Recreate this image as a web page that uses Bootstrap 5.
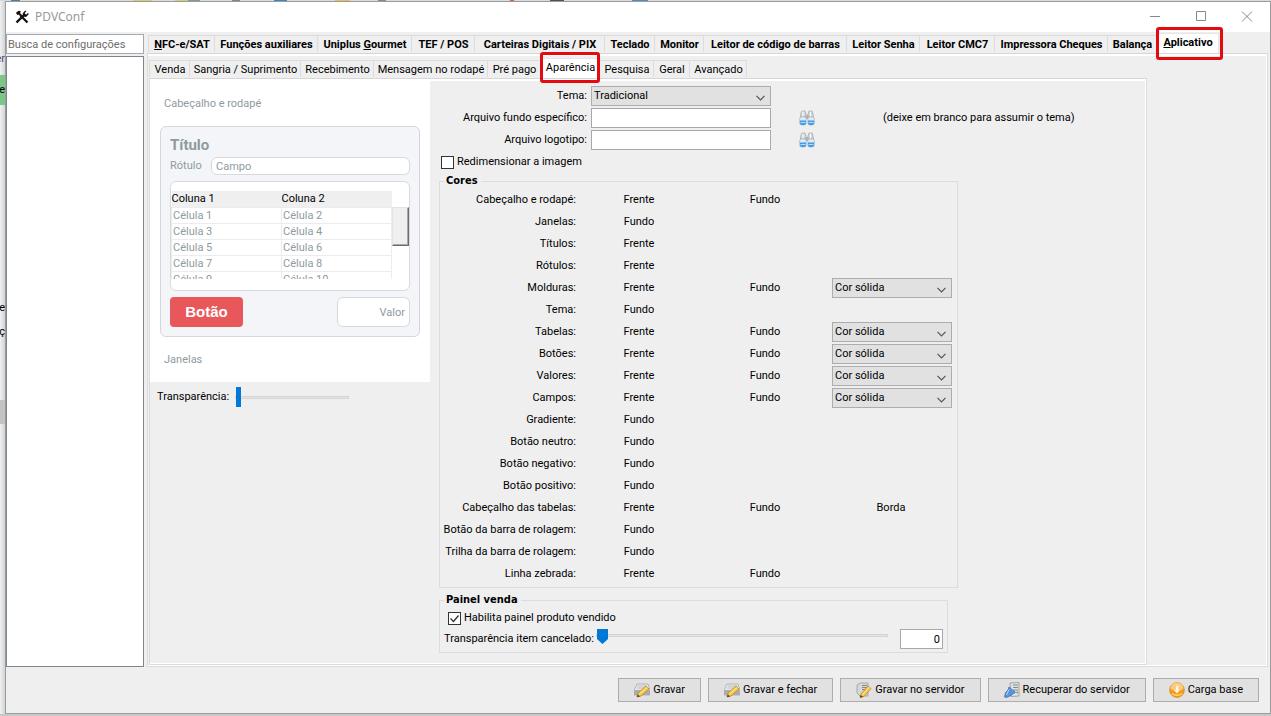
<!doctype html>
<html lang="pt-BR">
<head>
<meta charset="utf-8">
<meta name="viewport" content="width=device-width, initial-scale=1">
<title>PDVConf</title>
<link rel="stylesheet" href="https://cdn.jsdelivr.net/npm/bootstrap@5.3.0/dist/css/bootstrap.min.css">
<style>
:root{--face:#efefef;--line:#dcdcdc;--edge:#adadad;--soft:#8f9a9f}
body{font:11px/16px Roboto,"Liberation Sans",sans-serif;color:#000;background:#d9dadb}
/* desktop behind the window */
.desk-top{height:1px;background:linear-gradient(90deg,#d5dbe0 0 11px,#4f7fa0 0 20px,#dcdcdc 0 133px,#d8cb7c 0 152px,#dcdcdc 0 175px,#d8cb7c 0 188px,#7f98a8 0 200px,#dcdcdc 0 232px,#7d8792 0 240px,#dcdcdc 0 274px,#3c86bf 0 287px,#dcdcdc 0 335px,#e3bf63 0 350px,#dcdcdc 0 378px,#888 0 386px,#dcdcdc 0 510px,#d0672f 0 514px,#dcdcdc 0 550px,#4b545e 0 564px,#dcdcdc 0 632px,#4d8cc4 0 648px,#dcdcdc 0)}
.desk-side{width:5px;background:linear-gradient(90deg,#f0f1f2,#d2d3d4)}
.desk-side div{display:flex;justify-content:flex-end;align-items:center;overflow:hidden;flex:none}
.desk-a{height:72px;padding-top:44px}
.desk-b{height:30px;background:#79c886}
.desk-c{height:24px}
.desk-d{height:24px;background:#c4c4c4}
.app-window{border:1px solid #9b9b9b;background:var(--face);min-width:0}
.app-foot-shadow{height:2px;background:#c6c7c8}
.title-bar{height:30px;background:#fff;color:#999;font:12px/16px "Noto Sans",sans-serif;padding:0 15px 0 9px}
.caption-btn{border:0;background:none;padding:0;width:16px;height:16px;display:flex;align-items:center;justify-content:center}
.work{padding:2px 2px 0 0;gap:3px}
.side-col{width:138px;gap:2px}
.box-input{display:block;border:1px solid #a5a8ad;background:#fff;color:#000;height:20px;font-size:11px;line-height:16px;padding:0 2px;border-radius:0;min-width:0}
.box-input::placeholder{color:#6d6d6d;opacity:1}
.search-input{padding:0 1px}
.tree-box{border:1px solid #7f858c;background:#fff}
.tab-strip{display:grid;list-style:none;margin:0;padding:0}
.tab-strip a{display:block;color:#000;text-decoration:none;text-align:center;white-space:nowrap;height:17px;line-height:17px;border:solid var(--line);border-width:1px 1px 0 0;padding-left:1px}
.tab-strip li:first-child a{border-left-width:1px}
.tab-strip li{position:relative}
.tab-strip .current{margin-top:-2px;height:20px;background:#fff;border-color:#e6e6e6;position:relative;z-index:1}
.strip-main{font-weight:700;grid-template-columns:67px 103px 94px 63px 130px 50px 49px 143px 73px 75px 113px 49px 62px;padding:1px 0 0 1px}
.strip-sub{grid-template-columns:41px 111px 73px 114px 53px 59px 54px 36px 57px}
.ring::after{content:"";position:absolute;z-index:2;border:3px solid #e30b10;border-radius:3px;pointer-events:none}
.strip-main .ring::after{inset:-8px -4px -7px -1px}
.strip-sub .ring::after{inset:-8px 0 -5px -1px}
.panel-main,.panel-sub{border:1px solid var(--line);border-top-color:#d6d6d6;box-shadow:inset 0 2px #fff,inset -1px -1px #fff}
.panel-main{padding:6px 120px 1px 1px}
.preview{width:280px;flex:none}
.preview-page{background:#fff;height:301px;padding:0 10px;color:var(--soft)}
.preview-page .caption-line{line-height:16px;padding:15px 0 14px 4px}
.mock-card{border:1px solid #d4d7de;border-radius:6px;background:#f3f5f9;padding:8px 9px 9px}
.mock-title{font-size:15px;line-height:20px;font-weight:700}
.mock-field{border:1px solid #d6d9e0;border-radius:6px;background:#fff;color:var(--soft);font-size:11px;padding:0 4px;height:18px;min-width:0}
.mock-list{border:1px solid #d6d9e0;border-radius:6px;background:#fff;height:110px;padding-top:9px}
.mock-scroll{height:88px;overflow:hidden}
.mock-scroll table{width:221px;border-collapse:collapse;flex:none;table-layout:fixed}
.mock-scroll th{background:#efefef;color:#000;font-weight:400;padding:0;height:16px;line-height:16px}
.mock-scroll td{border:1px solid #ececec;padding:0 1px;line-height:15px;height:16px}
.mock-thumb{width:17px;height:39px;margin-top:16px;background:#efefef;border:1px solid;border-color:#e4e4e4 #6c6c6c #6c6c6c #e4e4e4;box-shadow:inset -1px -1px #a8a8a8}
.mock-btn{width:73px;height:30px;border:0;border-radius:4px;background:#e8585b;color:#fff;font:bold 15px/30px "Liberation Sans",sans-serif;padding:0}
.mock-value{width:73px;height:30px;text-align:right}
.pic-range{appearance:none;background:none;height:20px;margin:0;min-width:0;display:block}
.pic-range::-webkit-slider-runnable-track{height:3px;background:#e4e4e4;border:1px solid #d4d4d4}
.pic-range::-webkit-slider-thumb{appearance:none;background:#0078d7;border:0}
.range-bar{width:114px}
.range-bar::-webkit-slider-thumb{width:5px;height:20px;margin-top:-10px}
.range-point::-webkit-slider-thumb{width:11px;height:15px;margin-top:-6px;clip-path:polygon(0 0,100% 0,100% 66%,50% 100%,0 66%)}
.pic-select{border:1px solid var(--edge);border-radius:0;color:#000;height:20px;font-size:11px;line-height:16px;padding:0 20px 1px 2px;background:#e1e1e1 url("data:image/svg+xml,%3Csvg xmlns='http://www.w3.org/2000/svg' width='9' height='6'%3E%3Cpath d='M.5.8l4 4 4-4' fill='none' stroke='%23555' stroke-width='1.2'/%3E%3C/svg%3E") no-repeat right 5px top 8px/9px 6px}
.form-side{padding:5px 0 0 9px;min-width:0}
.file-grid{display:grid;grid-template-columns:149px 180px 66px 1fr;gap:2px 3px;align-items:center}
.file-grid .name{text-align:right;padding-right:1px}
.icon-btn{border:0;background:none;padding:0;width:16px;height:16px;display:block;justify-self:center}
.hint{padding-left:40px}
.pic-check{appearance:none;width:13px;height:13px;border:1px solid #333;background:#fff;margin:0;flex:none}
.pic-check:checked{background:#fff url("data:image/svg+xml,%3Csvg xmlns='http://www.w3.org/2000/svg' width='11' height='11'%3E%3Cpath d='M1.5 5.5l3 3 5-6' fill='none' stroke='%23333' stroke-width='1.3'/%3E%3C/svg%3E") center no-repeat}
.group-box{border:1px solid var(--line);position:relative}
.group-box legend{position:absolute;top:-9px;left:4px;width:auto;float:none;background:var(--face);font:bold 11px/16px "DejaVu Sans Condensed",sans-serif;margin:0;padding:0 3px 0 2px}
.group-colors{width:519px;padding:7px 0 2px;margin-top:11px}
.group-sale{width:509px;padding:9px 4px 3px;margin-top:12px}
.color-row{display:grid;grid-template-columns:136px 126px 126px 126px;height:22px;align-items:center;text-align:center}
.color-row .name{text-align:right}
.color-row .pic-select{width:120px;margin-left:4px}
.foot{padding:11px 11px 11px 0;gap:7px}
.foot button{height:24px;border:1px solid var(--edge);border-radius:0;background:#e1e1e1;color:#000;font-size:11px;line-height:16px;padding:0 15px;display:flex;align-items:center;justify-content:center;gap:3px;white-space:nowrap}
</style>
</head>
<body class="vh-100 d-flex flex-column overflow-hidden">
<svg class="d-none" aria-hidden="true">
  <symbol id="bino" viewBox="0 0 16 16">
    <path d="M3 1h3l1 3v3H1.500l.5-4zM10 1h3l1 3 .5 3H9V4z" fill="#d4d7da" stroke="#a4a8ac" stroke-width=".8"/>
    <path d="M4 1.500v5M11.500 1.500v5" stroke="#fff"/><path d="M6.500 5h3v4h-3z" fill="#aeb3b8"/>
    <rect x=".6" y="7" width="6.600" height="8" rx="2" fill="#e6eaee" stroke="#a9b4bf" stroke-width=".7"/>
    <rect x="8.800" y="7" width="6.600" height="8" rx="2" fill="#e6eaee" stroke="#a9b4bf" stroke-width=".7"/>
    <path d="M1 10.500h6v2.500a3 2 0 0 1-6 0zM9 10.500h6v2.500a3 2 0 0 1-6 0z" fill="#3b9cf0"/>
    <path d="M1.500 12.500h5M9.500 12.500h5" stroke="#b5dcff"/>
  </symbol>
  <symbol id="save" viewBox="0 0 16 16">
    <path d="M3 2h11l2 6v5H0V8z" fill="#e7e8ea" stroke="#a5a8ab" stroke-width=".8"/>
    <path d="M0 8h16v5H0z" fill="#a9adb1"/><path d="M4 4h9M3 6h10" stroke="#bfc3c7"/>
    <path d="M4 11l8-7 3 3-8 7-4 1z" fill="#f7c945" stroke="#b9822a" stroke-width=".8"/>
    <path d="M5.500 12l8-7" stroke="#ffeaa0"/><path d="M3 15l.8-2.500L6 14.500z" fill="#4a3a28"/>
  </symbol>
  <symbol id="server-edit" viewBox="0 0 16 16">
    <path d="M4 1h8v13H4L1 11V3z" fill="#d5d8db" stroke="#999da1" stroke-width=".8"/>
    <path d="M6 3.500h5M6 5.500h5M6 7.500h4" stroke="#858a8f"/>
    <path d="M5 12l7-8 3 2.500-7 8-4 1z" fill="#f7c945" stroke="#b9822a" stroke-width=".8"/>
    <path d="M6.500 13l7-8" stroke="#ffeaa0"/><path d="M4 15.500l.8-2.500L7 15z" fill="#4a3a28"/>
  </symbol>
  <symbol id="server-get" viewBox="0 0 16 16">
    <path d="M6 1l9-.5V14l-8 .5z" fill="#dfe3e4" stroke="#8f9699" stroke-width=".8"/>
    <path d="M9 3h5M9 5.500h5M9 8h5" stroke="#7e8b88"/><path d="M12.500 10.500h1.500" stroke="#48a04c" stroke-width="1.500"/>
    <path d="M5 5l6.500 5.500-2 1L7 13.500 2.500 15.500.5 15l1-4.500L4 8z" fill="#5b93dd" stroke="#3f70b8" stroke-width=".8"/>
    <path d="M5 7.500L2.500 13" stroke="#b9d8fa"/>
  </symbol>
  <symbol id="load" viewBox="0 0 16 16">
    <circle cx="8" cy="8" r="7.400" fill="#f59a23" stroke="#d97f1c" stroke-width=".6"/>
    <path d="M1.500 6.500a6.500 6 0 0 1 13 0C12 9.500 4 9.500 1.500 6.500z" fill="#fccb7c"/>
    <path d="M7 3.500h2.500V8H11l-3 3.500L5 8h2z" fill="#fff4dd"/><path d="M3 11.500a6 4 0 0 0 10 0" fill="none" stroke="#ffd75a" stroke-width="1.400"/>
  </symbol>
</svg>
<div class="desk-top flex-shrink-0"></div>
<div class="d-flex flex-grow-1" style="min-height:0">
  <div class="desk-side flex-shrink-0 overflow-hidden" aria-hidden="true">
    <div class="desk-a" style="color:#5a4a78">er</div>
    <div style="height:2px"></div>
    <div class="desk-b">e</div>
    <div style="height:191px"></div>
    <div class="desk-c">re</div><div class="desk-c">eç</div>
    <div style="height:56px"></div>
    <div class="desk-d"></div>
  </div>
  <div class="app-window flex-grow-1 d-flex flex-column">
    <header class="title-bar d-flex align-items-center flex-shrink-0">
      <svg width="14" height="14" viewBox="0 0 14 14" aria-hidden="true"><path d="M1 2.800L3.600.8 6 1.500 5 3l2 2.200L5.600 6.500 3.600 4.400 2.200 5z" fill="#111"/><path d="M5.500 5.500l7 7" stroke="#111" stroke-width="2.200"/><path d="M1.500 12.500l7-7" stroke="#111" stroke-width="2.400"/><path d="M8 6.500L7.600 3.500 10 .8l1.500.3-1.700 1.800.4 1.200 1.200.3 1.800-1.700.4 1.600-2.500 2.600z" fill="#111"/></svg>
      <span class="flex-grow-1" style="margin-left:6px">PDVConf</span>
      <div class="d-flex" style="gap:30px">
        <button class="caption-btn" aria-label="Minimizar"><svg width="12" height="12"><path d="M1 5.500h10" stroke="#888"/></svg></button>
        <button class="caption-btn" aria-label="Maximizar"><svg width="12" height="12"><path d="M1.500 .5h9v9h-9z" fill="none" stroke="#888"/></svg></button>
        <button class="caption-btn" aria-label="Fechar"><svg width="12" height="12"><path d="M1 .5l10 10M11 .5L1 10.500" stroke="#888" fill="none"/></svg></button>
      </div>
    </header>
    <main class="work d-flex flex-grow-1" style="min-height:0">
      <div class="side-col d-flex flex-column flex-shrink-0">
        <input class="box-input search-input w-100" type="search" placeholder="Busca de configurações" aria-label="Busca de configurações">
        <div class="tree-box flex-grow-1"></div>
      </div>
      <div class="flex-grow-1 d-flex flex-column">
        <ul class="tab-strip strip-main">
          <li><a href="#"><u>N</u>FC-e/SAT</a></li><li><a href="#">Funções auxiliares</a></li><li><a href="#">Uniplus <u>G</u>ourmet</a></li><li><a href="#">TEF / POS</a></li><li><a href="#">Carteiras Digitais / PIX</a></li><li><a href="#">Teclado</a></li><li><a href="#">Monitor</a></li><li><a href="#">Leitor de código de barras</a></li><li><a href="#">Leitor Senha</a></li><li><a href="#">Leitor CMC7</a></li><li><a href="#">Impressora Cheques</a></li><li><a href="#">Balança</a></li><li class="ring"><a class="current" href="#"><u>A</u>plicativo</a></li>
        </ul>
        <div class="panel-main flex-grow-1 d-flex flex-column">
          <ul class="tab-strip strip-sub">
            <li><a href="#">Venda</a></li><li><a href="#">Sangria / Suprimento</a></li><li><a href="#">Recebimento</a></li><li><a href="#">Mensagem no rodapé</a></li><li><a href="#">Pré pago</a></li><li class="ring"><a class="current" href="#">Aparência</a></li><li><a href="#">Pesquisa</a></li><li><a href="#">Geral</a></li><li><a href="#">Avançado</a></li>
          </ul>
          <div class="panel-sub flex-grow-1 d-flex" style="padding-top:2px">
            <section class="preview">
              <div class="preview-page">
                <div class="caption-line">Cabeçalho e rodapé</div>
                <div class="mock-card">
                  <div class="mock-title">Título</div>
                  <div class="d-flex align-items-center" style="margin-top:2px">
                    <label for="campo" style="width:41px">Rótulo</label>
                    <input id="campo" class="mock-field flex-grow-1" value="Campo">
                  </div>
                  <div class="mock-list" style="margin-top:6px">
                    <div class="mock-scroll d-flex">
                      <table>
                        <thead><tr><th>Coluna 1</th><th>Coluna 2</th></tr></thead>
                        <tbody><tr><td>Célula 1</td><td>Célula 2</td></tr><tr><td>Célula 3</td><td>Célula 4</td></tr><tr><td>Célula 5</td><td>Célula 6</td></tr><tr><td>Célula 7</td><td>Célula 8</td></tr><tr><td>Célula 9</td><td>Célula 10</td></tr></tbody>
                      </table>
                      <div class="mock-thumb"></div>
                    </div>
                  </div>
                  <div class="d-flex justify-content-between" style="margin-top:6px">
                    <button class="mock-btn">Botão</button>
                    <input class="mock-field mock-value" value="Valor" aria-label="Valor">
                  </div>
                </div>
                <div class="caption-line">Janelas</div>
              </div>
              <div class="d-flex align-items-center" style="padding:5px 0 0 7px">
                <label for="transp" style="width:78px">Transparência:</label>
                <input id="transp" class="pic-range range-bar" type="range" value="0">
              </div>
            </section>
            <section class="form-side flex-grow-1">
              <div class="file-grid">
                <label class="name" for="tema">Tema:</label>
                <select id="tema" class="form-select pic-select"><option>Tradicional</option></select><span></span><span></span>
                <label class="name" for="fundo">Arquivo fundo específico:</label>
                <input id="fundo" class="box-input">
                <button class="icon-btn" aria-label="Procurar fundo"><svg width="16" height="16" class="d-block"><use href="#bino"/></svg></button>
                <span class="hint">(deixe em branco para assumir o tema)</span>
                <label class="name" for="logo">Arquivo logotipo:</label>
                <input id="logo" class="box-input">
                <button class="icon-btn" aria-label="Procurar logotipo"><svg width="16" height="16" class="d-block"><use href="#bino"/></svg></button>
              </div>
              <div class="d-flex align-items-center" style="margin-top:4px;padding-left:2px">
                <input id="redim" class="pic-check" type="checkbox"><label for="redim" style="padding-left:3px">Redimensionar a imagem</label>
              </div>
              <fieldset class="group-box group-colors">
                <legend>Cores</legend>
                <div id="color-rows"></div>
              </fieldset>
              <fieldset class="group-box group-sale">
                <legend>Painel venda</legend>
                <div class="d-flex align-items-center" style="padding-left:4px">
                  <input id="habilita" class="pic-check" type="checkbox" checked><label for="habilita" style="padding-left:3px">Habilita painel produto vendido</label>
                </div>
                <div class="d-flex align-items-center" style="margin-top:3px">
                  <label for="item" style="width:152px">Transparência item cancelado:</label>
                  <input id="item" class="pic-range range-point flex-grow-1 align-self-start" style="height:13px" type="range" value="0">
                  <input class="box-input text-end" style="width:43px;margin-left:12px" value="0" aria-label="Valor da transparência">
                </div>
              </fieldset>
            </section>
          </div>
        </div>
      </div>
    </main>
    <footer class="foot d-flex justify-content-end flex-shrink-0">
      <button><svg width="16" height="16"><use href="#save"/></svg>Gravar</button>
      <button><svg width="16" height="16"><use href="#save"/></svg>Gravar e fechar</button>
      <button><svg width="16" height="16"><use href="#server-edit"/></svg>Gravar no servidor</button>
      <button><svg width="16" height="16"><use href="#server-get"/></svg>Recuperar do servidor</button>
      <button><svg width="16" height="16"><use href="#load"/></svg>Carga base</button>
    </footer>
  </div>
</div>
<div class="app-foot-shadow flex-shrink-0"></div>
<script src="https://cdn.jsdelivr.net/npm/bootstrap@5.3.0/dist/js/bootstrap.bundle.min.js"></script>
<script>
// label, first, second, third column ("*" draws the fill-type list)
const rows = [
  ['Cabeçalho e rodapé','Frente','Fundo'],['Janelas','Fundo'],['Títulos','Frente'],['Rótulos','Frente'],
  ['Molduras','Frente','Fundo','*'],['Tema','Fundo'],['Tabelas','Frente','Fundo','*'],['Botões','Frente','Fundo','*'],
  ['Valores','Frente','Fundo','*'],['Campos','Frente','Fundo','*'],['Gradiente','Fundo'],['Botão neutro','Fundo'],
  ['Botão negativo','Fundo'],['Botão positivo','Fundo'],['Cabeçalho das tabelas','Frente','Fundo','Borda'],
  ['Botão da barra de rolagem','Fundo'],['Trilha da barra de rolagem','Fundo'],['Linha zebrada','Frente','Fundo']
];
document.getElementById('color-rows').innerHTML = rows.map(([name, ...cells]) =>
  `<div class="color-row"><span class="name">${name}:</span>${cells.map(c => c === '*'
    ? `<select class="form-select pic-select" aria-label="Preenchimento: ${name}"><option>Cor sólida</option></select>`
    : `<span>${c}</span>`).join('')}</div>`).join('');
</script>
</body>
</html>
